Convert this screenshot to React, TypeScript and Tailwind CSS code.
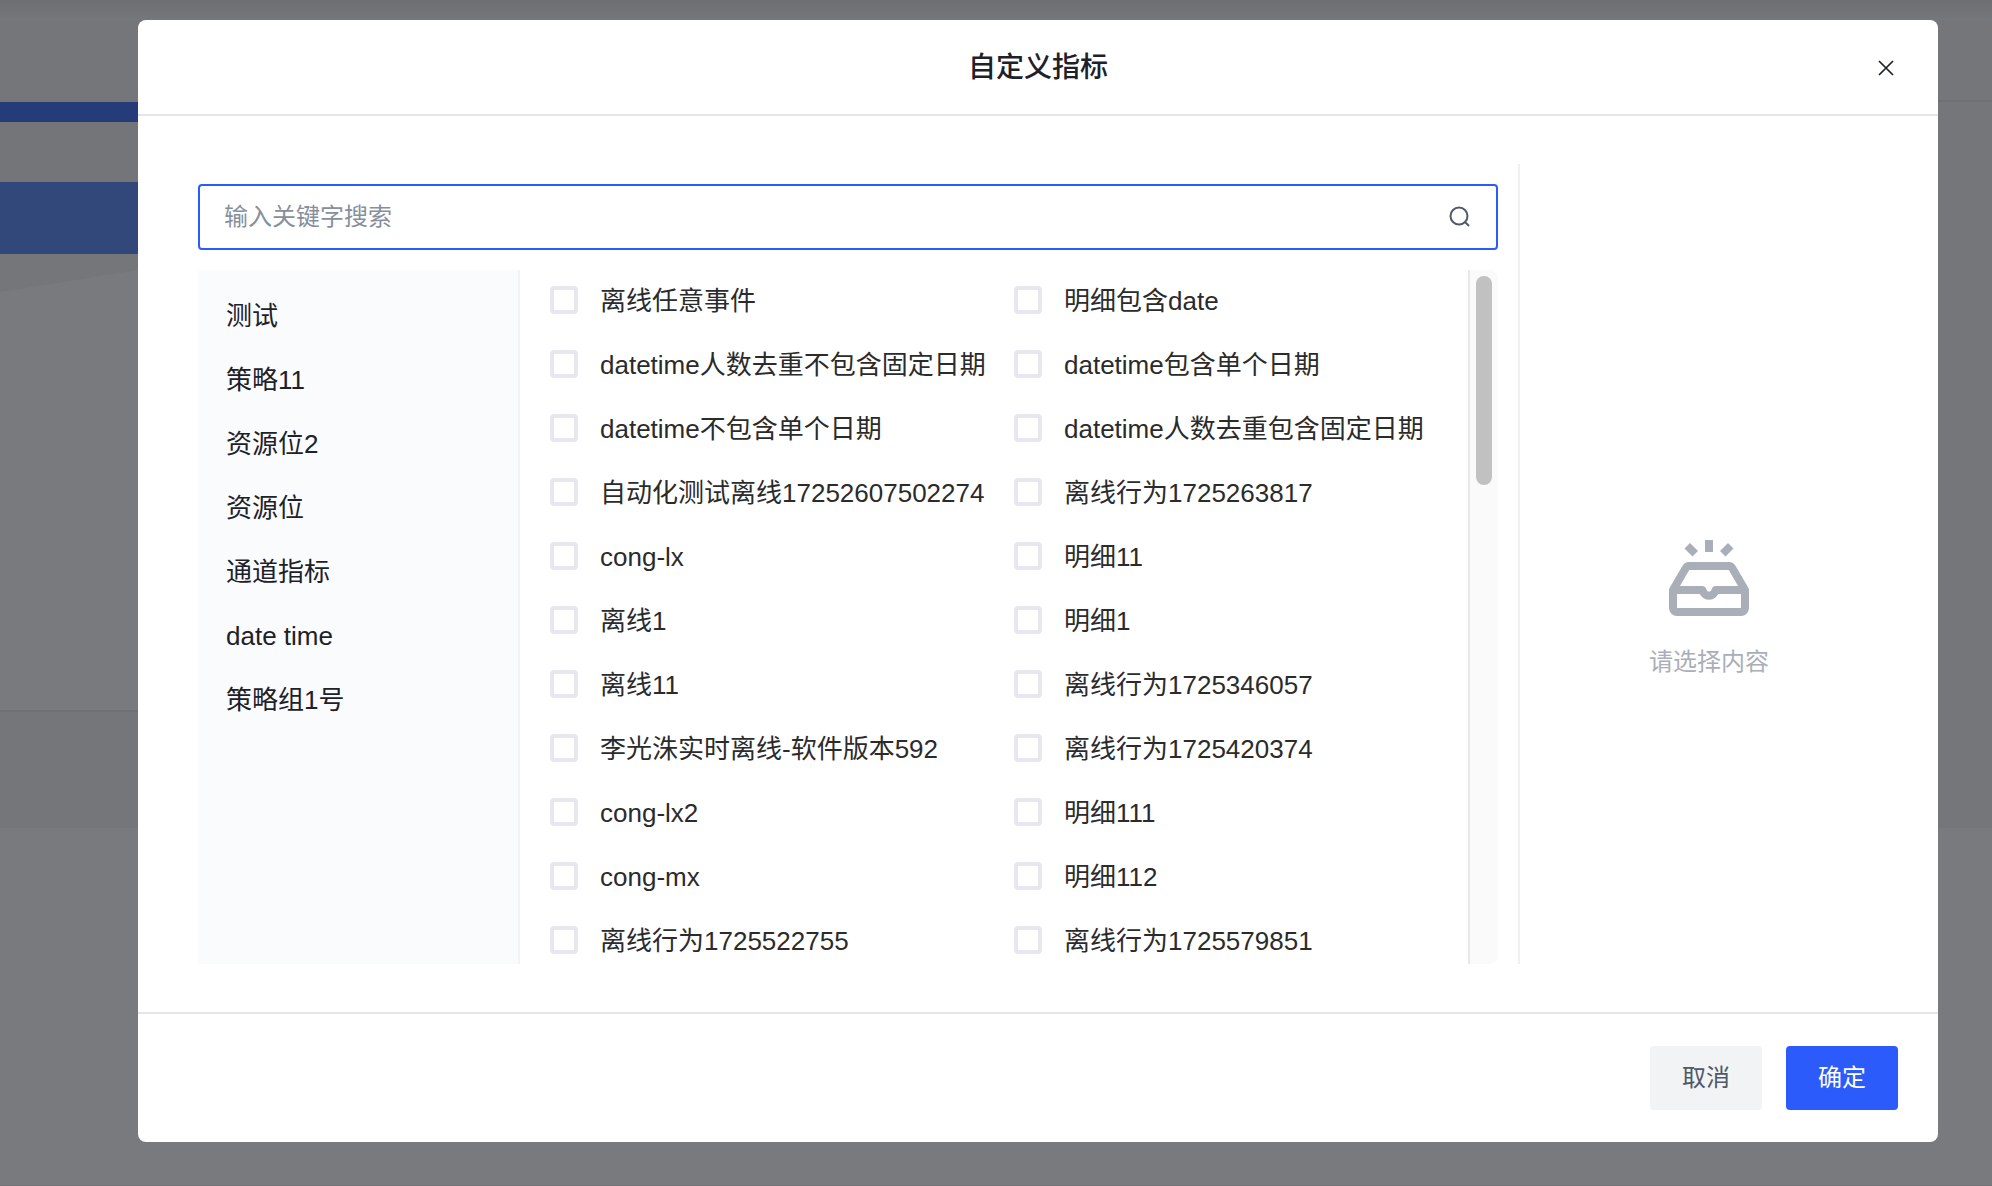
import { useState } from "react";

type Metric = {
  id: number;
  name: string;
};

const categories = [
  "测试",
  "策略11",
  "资源位2",
  "资源位",
  "通道指标",
  "date time",
  "策略组1号",
];

const metrics: Metric[] = [
  "离线任意事件",
  "明细包含date",
  "datetime人数去重不包含固定日期",
  "datetime包含单个日期",
  "datetime不包含单个日期",
  "datetime人数去重包含固定日期",
  "自动化测试离线17252607502274",
  "离线行为1725263817",
  "cong-lx",
  "明细11",
  "离线1",
  "明细1",
  "离线11",
  "离线行为1725346057",
  "李光洙实时离线-软件版本592",
  "离线行为1725420374",
  "cong-lx2",
  "明细111",
  "cong-mx",
  "明细112",
  "离线行为1725522755",
  "离线行为1725579851",
].map((name, id) => ({ id, name }));

function CloseIcon() {
  return (
    <svg width="20" height="20" viewBox="0 0 20 20" fill="none">
      <path d="M3 3L17 17M17 3L3 17" stroke="#1d2129" strokeWidth="1.7" />
    </svg>
  );
}

function SearchIcon() {
  return (
    <svg width="24" height="24" viewBox="0 0 24 24" fill="none">
      <circle cx="11" cy="11" r="8.5" stroke="#4e5969" strokeWidth="2" />
      <path d="M17 17L21 21" stroke="#4e5969" strokeWidth="2" />
    </svg>
  );
}

function EmptyIcon() {
  return (
    <svg width="80" height="76" viewBox="0 0 80 76" fill="none">
      <g fill="#a9aeb8">
        <path d="M36 0h8v12h-8z" />
        <path d="M15.500 8.600L21 3.100L29 11L23.500 16.600z" />
        <path d="M64.500 8.600L59 3.100L51 11L56.500 16.600z" />
      </g>
      <g stroke="#a9aeb8" strokeWidth="8" strokeLinejoin="round">
        <path d="M4 50L16.500 28.400Q17.900 26 20 26H60Q62.100 26 63.500 28.400L76 50V68a4 4 0 0 1-4 4H8a4 4 0 0 1-4-4z" />
        <path d="M4 50H33.300A7 8 0 0 0 46.700 50H76" />
      </g>
    </svg>
  );
}

// dimmed page that stays visible around the dialog
function Backdrop() {
  return (
    <div className="absolute inset-0 flex flex-col border-b border-[#727377] bg-[#797a7d]">
      <div className="h-5 bg-linear-to-b from-[#6e6e72] to-[#74777b]" />
      <div className="h-20 bg-[#75767a]" />
      <div className="flex h-[728px] shrink-0">
        <div className="flex w-1/2 flex-col">
          <div className="h-[2px] bg-[#737477]" />
          <div className="h-5 bg-[#263b7a]" />
          <div className="h-[60px] bg-[#747578]" />
          <div className="h-[72px] bg-[#32487a]" />
          <svg className="h-[38px] w-[138px] bg-[#797a7d]">
            <path d="M0 0H138V16L0 38z" fill="#757679" />
          </svg>
          <div className="mt-auto h-[118px] border-t-2 border-[#707174] bg-[#75767a]" />
        </div>
        <div className="w-1/2 border-t-2 border-[#6f7074] bg-[#75767a]" />
      </div>
    </div>
  );
}

export default function App() {
  const [keyword, setKeyword] = useState("");
  const [checked, setChecked] = useState<number[]>([]);

  const toggle = (id: number) => {
    setChecked((prev) =>
      prev.includes(id) ? prev.filter((item) => item !== id) : [...prev, id]
    );
  };

  return (
    <div className="relative h-screen overflow-hidden font-['Liberation_Sans','Noto_Sans_CJK_SC',sans-serif] text-[#1d2129]">
      <Backdrop />
      <div className="relative flex h-full pt-5 pr-[54px] pb-11 pl-[138px]">
        <div
          role="dialog"
          aria-labelledby="dialog-title"
          className="flex flex-1 flex-col rounded-lg bg-white"
        >
          <header className="flex h-24 shrink-0 items-center border-b-2 border-[#e5e6eb] px-10 pt-[2px]">
            <span className="w-6" />
            <h2
              id="dialog-title"
              className="flex-1 text-center text-[28px] leading-10 font-medium"
            >
              自定义指标
            </h2>
            <button aria-label="关闭" className="flex w-6 justify-center">
              <CloseIcon />
            </button>
          </header>

          <div className="flex min-h-0 flex-1 py-12 pl-[60px]">
            <div className="flex min-w-0 flex-1 flex-col gap-5 border-r-2 border-[#f0f0f0] pt-5 pr-5">
              <label className="flex h-[66px] shrink-0 items-center rounded-sm border-2 border-[#2b5cfb] px-6">
                <input
                  type="text"
                  aria-label="输入关键字搜索"
                  placeholder="输入关键字搜索"
                  value={keyword}
                  onChange={(e) => setKeyword(e.target.value)}
                  className="min-w-0 flex-1 text-2xl outline-none placeholder:text-[#86909c]"
                />
                <SearchIcon />
              </label>

              <div className="flex min-h-0 flex-1">
                <ul className="w-[322px] shrink-0 border-r-2 border-[#f2f3f5] bg-[#fafbfd] px-7 pt-[14px]">
                  {categories.map((item) => (
                    <li key={item} className="text-[26px] leading-[64px]">
                      {item}
                    </li>
                  ))}
                </ul>
                <div className="grid flex-1 auto-rows-[60px] grid-cols-2 gap-x-[10px] gap-y-1 overflow-hidden pl-[30px]">
                  {metrics.map((item) => (
                    <label
                      key={item.id}
                      className="flex items-center gap-[22px] text-[26px] whitespace-nowrap text-[#2b2b2b]"
                    >
                      <input
                        type="checkbox"
                        checked={checked.includes(item.id)}
                        onChange={() => toggle(item.id)}
                        className="size-7 shrink-0 appearance-none rounded-sm border-4 border-[#e7e8ee] bg-white checked:bg-[#2b5cfb]"
                      />
                      <span className="pt-[2px]">{item.name}</span>
                    </label>
                  ))}
                </div>
                <div className="flex w-[30px] shrink-0 overflow-hidden rounded-r-lg">
                  <div className="flex-1 border-x-2 border-[#e8e8e8] bg-[#fafafa] px-[6px] pt-[6px]">
                    <div className="h-[209px] w-4 rounded-full bg-[#c1c1c1]" />
                  </div>
                </div>
              </div>
            </div>

            <div className="flex w-[418px] shrink-0 flex-col items-center justify-center gap-7 pt-[92px] pr-10 text-[#a9aeb8]">
              <EmptyIcon />
              <p className="text-2xl leading-9">请选择内容</p>
            </div>
          </div>

          <footer className="flex shrink-0 justify-end gap-6 border-t-2 border-[#e5e6eb] px-10 py-8">
            <button className="h-16 w-28 rounded-sm bg-[#f2f3f5] text-2xl text-[#4e5969]">
              取消
            </button>
            <button className="h-16 w-28 rounded-sm bg-[#2b5cfb] text-2xl text-white">
              确定
            </button>
          </footer>
        </div>
      </div>
    </div>
  );
}
